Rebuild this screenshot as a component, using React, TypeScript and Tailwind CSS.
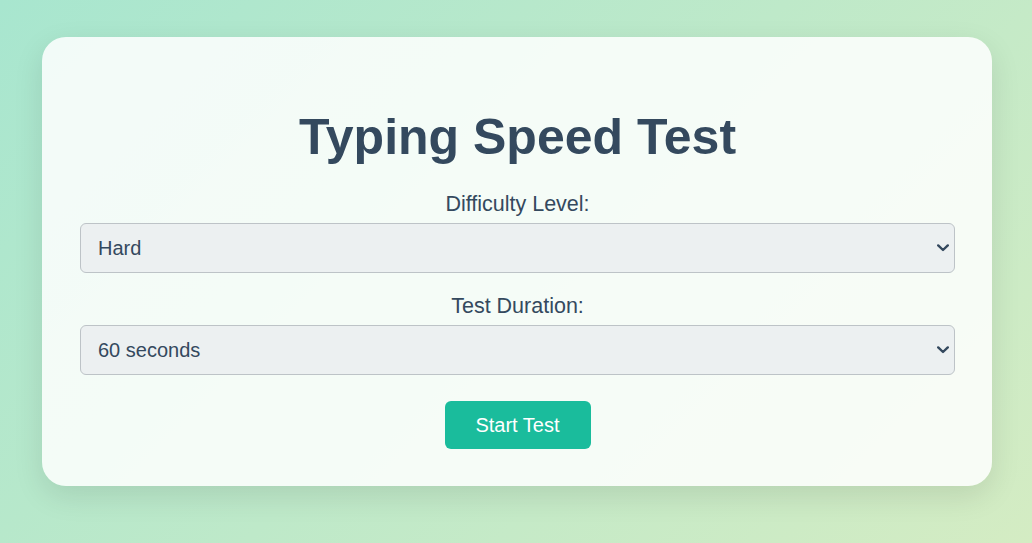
import React, { useState } from "react";

const font = { fontFamily: "'Liberation Sans', Arial, sans-serif" };

function Chevron() {
  return (
    <svg
      width="12"
      height="8"
      viewBox="0 0 12 8"
      className="pointer-events-none absolute right-[6px] top-1/2 -translate-y-1/2"
    >
      <path d="M1.2 1.4 L6 6 L10.8 1.4" fill="none" stroke="#34495e" strokeWidth="2.4" strokeLinecap="round" strokeLinejoin="round" />
    </svg>
  );
}

function Select({ id, value, onChange, options }: {
  id: string;
  value: string;
  onChange: (v: string) => void;
  options: { value: string; label: string }[];
}) {
  return (
    <div className="relative w-full">
      <select
        id={id}
        value={value}
        onChange={e => onChange(e.target.value)}
        className="h-[50px] w-full appearance-none rounded-md border border-[#bdc3c7] bg-[#ecf0f1] pl-[17px] pr-[30px] text-[20px] text-[#34495e] outline-none"
        style={font}
      >
        {options.map(o => (
          <option key={o.value} value={o.value}>{o.label}</option>
        ))}
      </select>
      <Chevron />
    </div>
  );
}

export default function App() {
  const [difficulty, setDifficulty] = useState("hard");
  const [duration, setDuration] = useState("60");

  return (
    <div
      className="min-h-[543px] w-full bg-[linear-gradient(135deg,#a8e6cf,#d4ecc3)] pl-[42px] pr-[40px] pt-[37px] pb-[57px] text-[#34495e]"
      style={font}
    >
      {/* Card */}
      <div className="flex flex-col items-center rounded-3xl bg-white/85 pl-[38px] pr-[37px] pt-[71px] pb-[37px] shadow-[0_10px_30px_rgba(0,0,0,0.1)]">
        <h1 className="text-[50px] font-bold leading-[58px]">Typing Speed Test</h1>

        <label htmlFor="difficulty" className="mt-[26px] mb-[6px] text-[21.5px] leading-[25px]">
          Difficulty Level:
        </label>
        <Select
          id="difficulty"
          value={difficulty}
          onChange={setDifficulty}
          options={[
            { value: "easy", label: "Easy" },
            { value: "medium", label: "Medium" },
            { value: "hard", label: "Hard" },
          ]}
        />

        <label htmlFor="duration" className="mt-[21px] mb-[6px] text-[21.5px] leading-[25px]">
          Test Duration:
        </label>
        <Select
          id="duration"
          value={duration}
          onChange={setDuration}
          options={[
            { value: "30", label: "30 seconds" },
            { value: "60", label: "60 seconds" },
            { value: "120", label: "120 seconds" },
          ]}
        />

        <button className="mt-[26px] h-[48px] w-[146px] rounded-md bg-[#1abc9c] text-[20px] text-white">
          Start Test
        </button>
      </div>
    </div>
  );
}
